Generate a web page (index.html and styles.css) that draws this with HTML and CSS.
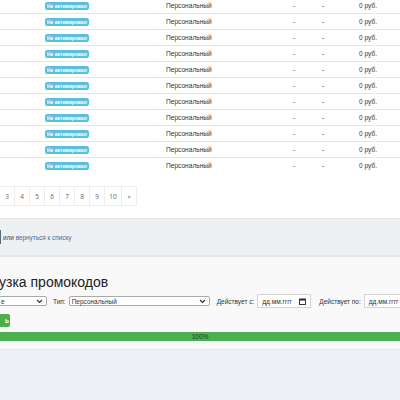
FILE: index.html
```html
<!DOCTYPE html>
<html>
<head>
<meta charset="utf-8">
<link rel="stylesheet" href="styles.css">
</head>
<body>
<div class="page">
  <div class="table">
    <div class="row"><span></span><span><span class="badge">Не активирован</span></span><span>Персональный</span><span>-</span><span>-</span><span>0 руб.</span></div>
    <div class="row"><span></span><span><span class="badge">Не активирован</span></span><span>Персональный</span><span>-</span><span>-</span><span>0 руб.</span></div>
    <div class="row"><span></span><span><span class="badge">Не активирован</span></span><span>Персональный</span><span>-</span><span>-</span><span>0 руб.</span></div>
    <div class="row"><span></span><span><span class="badge">Не активирован</span></span><span>Персональный</span><span>-</span><span>-</span><span>0 руб.</span></div>
    <div class="row"><span></span><span><span class="badge">Не активирован</span></span><span>Персональный</span><span>-</span><span>-</span><span>0 руб.</span></div>
    <div class="row"><span></span><span><span class="badge">Не активирован</span></span><span>Персональный</span><span>-</span><span>-</span><span>0 руб.</span></div>
    <div class="row"><span></span><span><span class="badge">Не активирован</span></span><span>Персональный</span><span>-</span><span>-</span><span>0 руб.</span></div>
    <div class="row"><span></span><span><span class="badge">Не активирован</span></span><span>Персональный</span><span>-</span><span>-</span><span>0 руб.</span></div>
    <div class="row"><span></span><span><span class="badge">Не активирован</span></span><span>Персональный</span><span>-</span><span>-</span><span>0 руб.</span></div>
    <div class="row"><span></span><span><span class="badge">Не активирован</span></span><span>Персональный</span><span>-</span><span>-</span><span>0 руб.</span></div>
    <div class="row last"><span></span><span><span class="badge">Не активирован</span></span><span>Персональный</span><span>-</span><span>-</span><span>0 руб.</span></div>
  </div>

  <div class="pagination">
    <span class="pg">3</span><span class="pg">4</span><span class="pg">5</span><span class="pg">6</span><span class="pg">7</span><span class="pg">8</span><span class="pg">9</span><span class="pg wide">10</span><span class="pg">»</span>
  </div>

  <div class="band">
    <span class="btn-edge"></span><span class="or">или <a class="link">вернуться к списку</a></span>
  </div>

  <div class="upload">
    <h2 class="title">узка промокодов</h2>
    <div class="form-row">
      <div class="select first"><span>е</span><svg width="7" height="5" viewBox="0 0 7 5"><path d="M1 1l2.5 2.5L6 1" fill="none" stroke="#333" stroke-width="1.2"/></svg></div>
      <label class="lbl">Тип:</label>
      <div class="select type"><span>Персональный</span><svg width="7" height="5" viewBox="0 0 7 5"><path d="M1 1l2.5 2.5L6 1" fill="none" stroke="#333" stroke-width="1.2"/></svg></div>
      <label class="lbl">Действует с:</label>
      <div class="date"><span>дд.мм.гггг</span><svg width="7" height="7" viewBox="0 0 7 7"><rect x="0.5" y="1" width="6" height="5.5" fill="none" stroke="#222" stroke-width="0.9"/><rect x="0.5" y="1" width="6" height="1.5" fill="#222"/></svg></div>
      <label class="lbl">Действует по:</label>
      <div class="date wide"><span>дд.мм.гггг</span></div>
    </div>
    <div class="btn-row"><span class="btn-green">ь</span></div>
    <div class="progress"><span>100%</span></div>
  </div>
  <div class="footer-bg"></div>
</div>
</body>
</html>
```
FILE: styles.css
```css
html, body {
  margin: 0;
  padding: 0;
  background: #ffffff;
  overflow: hidden;
  width: 400px;
  height: 400px;
}
.page {
  font-family: "Liberation Sans", Arial, sans-serif;
  color: #333;
  font-size: 6.6px;
  width: 400px;
  overflow: hidden;
}
.table {
  margin-top: -2px;
}
.row {
  display: grid;
  grid-template-columns: 45px 121px 127px 29px 37px 1fr;
  height: 15px;
  align-items: center;
  border-bottom: 1px solid #e6e6e6;
}
.row.last {
  border-bottom: none;
}
.badge {
  display: inline-block;
  background: #5bc0de;
  color: #fff;
  font-size: 5px;
  font-weight: bold;
  line-height: 8px;
  height: 8px;
  padding: 0 2px;
  border-radius: 2px;
  white-space: nowrap;
}
.pagination {
  display: flex;
  margin: 13px 0 0 -1px;
  height: 19px;
}
.pg {
  width: 14px;
  height: 18px;
  border: 1px solid #ececec;
  margin-right: -1px;
  display: flex;
  align-items: center;
  justify-content: center;
  font-family: "Open Sans", sans-serif;
  font-size: 6.5px;
  color: #666;
}
.pg.wide {
  width: 16px;
}
.band {
  margin-top: 13px;
  height: 36px;
  background: #ecf0f3;
  border-top: 1px solid #dfe3e6;
  border-bottom: 2px solid #e3e7ea;
  display: flex;
  align-items: center;
}
.btn-edge {
  width: 1px;
  height: 14px;
  background: #5a6672;
  margin-right: 2px;
}
.or {
  font-size: 6.4px;
  color: #444;
}
.link {
  color: #4e6d8c;
}
.upload {
  background: #f9f9f9;
  padding-top: 15px;
  border-bottom: 1px solid #e3e6e8;
  padding-bottom: 8px;
}
.title {
  margin: 0 0 0 -1px;
  font-family: "Liberation Sans", Arial, sans-serif;
  font-weight: 400;
  font-size: 14px;
  line-height: 20px;
  color: #222;
}
.form-row {
  display: flex;
  align-items: center;
  margin-top: 1px;
  height: 16px;
  white-space: nowrap;
  overflow: hidden;
}
.form-row > * {
  flex-shrink: 0;
}
.select, .date {
  height: 10px;
  border: 1px solid #aaa;
  background: #fff;
  display: flex;
  align-items: center;
  justify-content: space-between;
  padding: 0 3px 0 2px;
  font-size: 6.5px;
  color: #333;
  box-sizing: border-box;
}
.select.first {
  width: 49px;
  margin-left: -2px;
  border-radius: 2px;
}
.select.type {
  width: 141px;
  border-radius: 2px;
}
.lbl {
  font-size: 6.5px;
  color: #333;
  margin: 0 3px 0 6px;
}
.select.type + .lbl {
  margin-left: 7px;
}
.date {
  height: 14px;
  width: 54px;
  border-color: #d4d4d4;
  padding: 0 4px;
}
.date.wide {
  width: 60px;
}
.date + .lbl {
  margin-left: 8px;
}
.btn-row {
  margin-top: 5px;
  height: 13px;
}
.btn-green {
  display: inline-flex;
  align-items: center;
  justify-content: flex-end;
  width: 10px;
  height: 13px;
  background: #4cae4c;
  color: #fff;
  font-size: 6.5px;
  font-weight: bold;
  border-radius: 0 2px 2px 0;
  padding-right: 1px;
  box-sizing: border-box;
}
.progress {
  margin-top: 5px;
  height: 9px;
  background: #4caf50;
  display: flex;
  align-items: center;
  justify-content: center;
  font-size: 6.5px;
  color: #1f3b1f;
}
.footer-bg {
  background: #edf1f5;
  height: 60px;
}
```
